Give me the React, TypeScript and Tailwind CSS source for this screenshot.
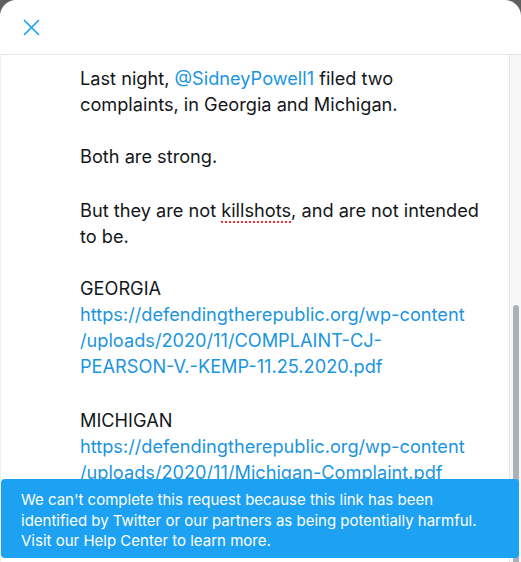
export default function App() {
  const font = { fontFamily: 'Inter, "Liberation Sans", Arial, sans-serif' }
  return (
    <div className="relative h-[562px] w-[521px] overflow-hidden bg-[#5f5f5f]" style={font}>
      <div className="flex h-full flex-col rounded-t-[16px] bg-white">
        <header className="flex h-[55px] shrink-0 items-center border-b border-[#e1e8ed] pl-[23px]">
          <svg width="17" height="17" viewBox="0 0 17 17" fill="none" stroke="#1da1f2" strokeWidth="1.7" strokeLinecap="round">
            <path d="M1.5 1.5 L15.5 15.5 M15.5 1.5 L1.5 15.5" />
          </svg>
        </header>

        <div className="flex min-h-0 flex-1">
          <main className="flex-1 overflow-hidden whitespace-nowrap border-l border-[#eef1f3] pl-[79px] pt-[10px] text-[18.2px] leading-[26px] text-[#14171a]">
            <p>
              Last night, <span className="text-[#1b95e0]">@SidneyPowell1</span> filed two
              <br />
              complaints, in Georgia and Michigan.
            </p>
            <p className="mt-[26px]">Both are strong.</p>
            <p className="mt-[28px]">
              But they are not{' '}
              <span className="underline decoration-red-500 decoration-dotted decoration-[1.5px] underline-offset-[4px]">
                killshots
              </span>
              , and are not intended
              <br />
              to be.
            </p>
            <p className="mt-[26px]">GEORGIA</p>
            <p className="text-[#1b95e0]">
              https://defendingtherepublic.org/wp-content
              <br />
              /uploads/2020/11/COMPLAINT-CJ-
              <br />
              PEARSON-V.-KEMP-11.25.2020.pdf
            </p>
            <p className="mt-[28px]">MICHIGAN</p>
            <p className="text-[#1b95e0]">
              https://defendingtherepublic.org/wp-content
              <br />
              /uploads/2020/11/Michigan-Complaint.pdf
            </p>
          </main>
          <div className="flex w-[12px] shrink-0 justify-center border-l border-[#e8e8e8] bg-[#f7f7f7] pt-[250px]">
            <div className="h-[300px] w-[6px] rounded-full bg-[#a9b2ba]" />
          </div>
        </div>
      </div>

      <div className="absolute bottom-[4px] left-[1px] right-[2px] h-[79px] whitespace-nowrap rounded-[4px] bg-[#1da1f2] px-[20px] pt-[11px] text-[15px] leading-[20.5px] text-white">
        We can't complete this request because this link has been
        <br />
        identified by Twitter or our partners as being potentially harmful.
        <br />
        Visit our Help Center to learn more.
      </div>
    </div>
  )
}
